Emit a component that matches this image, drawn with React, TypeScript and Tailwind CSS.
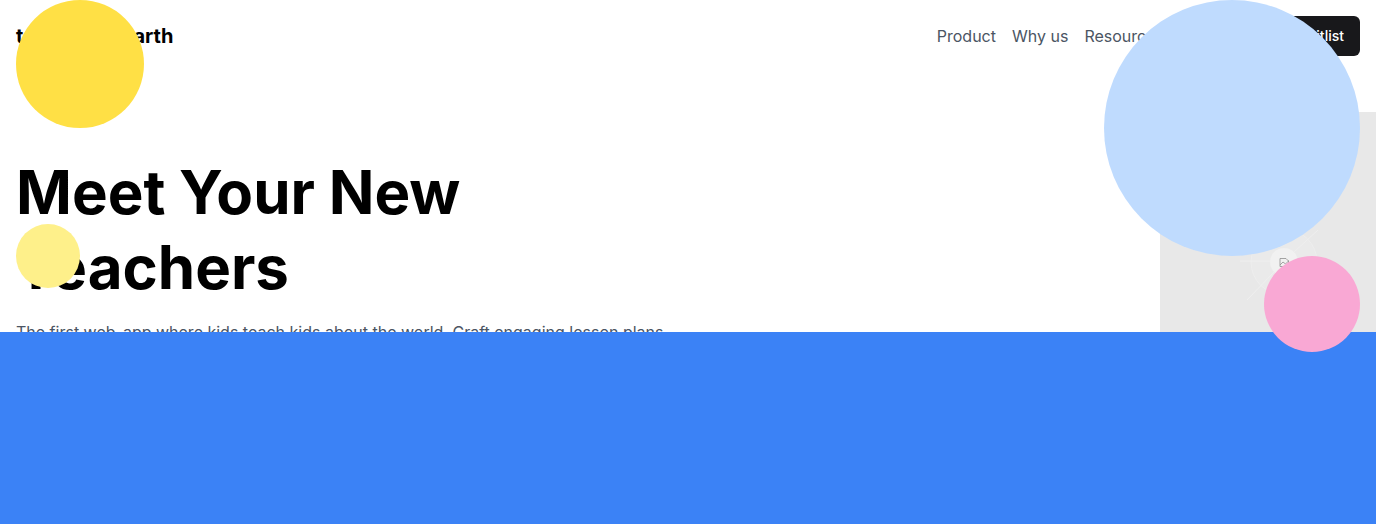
export default function App() {
  return (
    <div className="relative flex h-[524px] flex-col overflow-hidden bg-white font-['Inter',sans-serif]">
      <header className="flex h-[72px] items-center justify-between px-4">
        <div className="text-xl font-bold text-black [word-spacing:4.5px]">teach the earth</div>
        <nav className="flex items-center gap-4 text-base text-[#4b5563]">
          <a>Product</a>
          <a>Why us</a>
          <a>Resources</a>
          <a>Pricing</a>
          <button className="h-10 rounded-md bg-[#18181b] px-4 text-sm font-medium text-white">Join waitlist</button>
        </nav>
      </header>
      <main className="flex h-[260px] shrink-0 justify-between overflow-hidden">
        <section className="w-[700px] pt-[83px] pl-4">
          <h1 className="text-6xl leading-[75px] font-bold text-black [word-spacing:-0.5px]">Meet Your New<br />Teachers</h1>
          <p className="mt-[15px] text-base leading-6 text-[#4b5563]">The first web-app where kids teach kids about the world. Craft engaging lesson plans</p>
        </section>
        <div className="mt-10 w-[216px] bg-[#e8e8e8]">
          <svg width="216" height="220" viewBox="0 0 216 220" fill="none">
            <circle cx="124" cy="150" r="33" fill="#eaeaea" stroke="#eeeeee" />
            <path d="M80 149H110M87 188L114 160M158 118L134 140" stroke="#efefef" />
            <circle cx="124" cy="150" r="14" fill="#f1f1f1" />
            <g stroke="#8f8f8f" strokeWidth="0.8">
              <path d="M126 146.5H120V154.5H128.5V148.5" />
              <path d="M120 153L123 150L125.5 152L128.5 149L126 146.5" />
            </g>
          </svg>
        </div>
      </main>
      <div className="flex-1 bg-[#3b82f6]" />
      <div className="absolute top-0 left-4 h-32 w-32 rounded-full bg-[#ffe045]" />
      <div className="absolute top-56 left-4 h-16 w-16 rounded-full bg-[#fef08a]" />
      <div className="absolute top-0 left-[1104px] h-64 w-64 rounded-full bg-[#bfdbfe]" />
      <div className="absolute top-64 left-[1264px] h-24 w-24 rounded-full bg-[#f9a8d4]" />
    </div>
  );
}
